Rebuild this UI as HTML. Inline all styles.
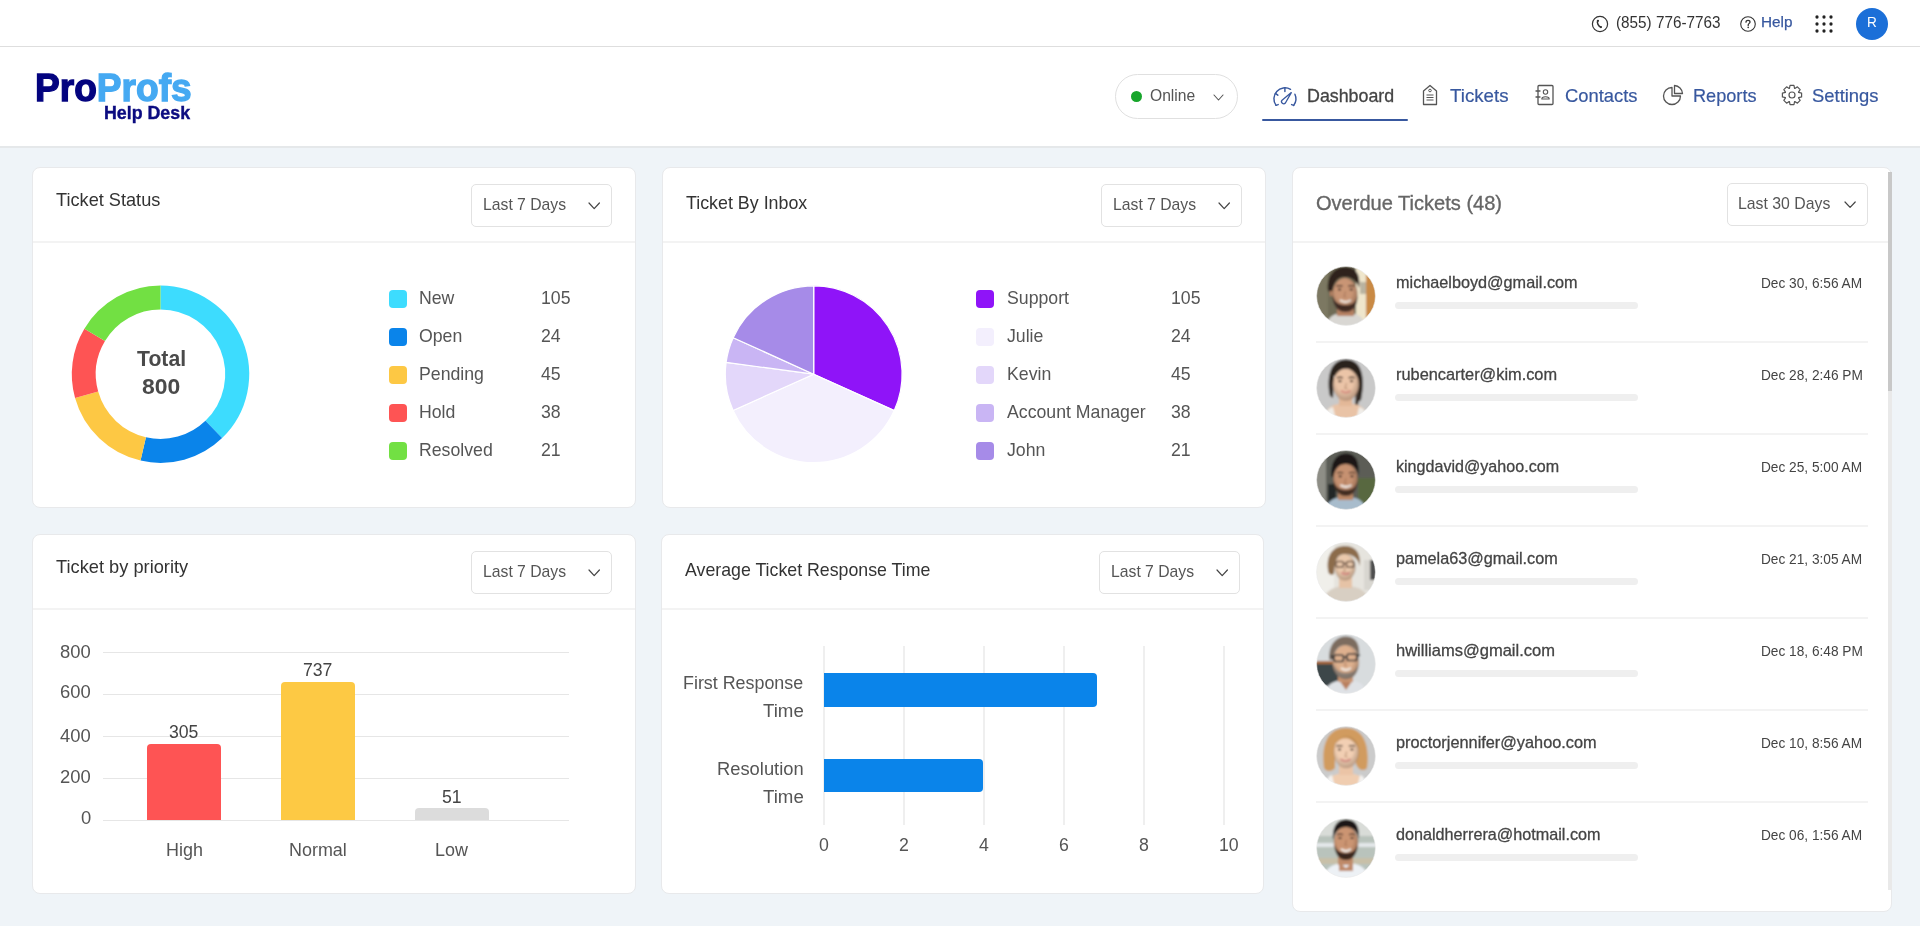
<!DOCTYPE html>
<html><head><meta charset="utf-8"><title>ProProfs Help Desk - Dashboard</title>
<style>
*{box-sizing:border-box;margin:0;padding:0}
html,body{width:1920px;height:928px;overflow:hidden;background:#fff;font-family:"Liberation Sans",sans-serif}
.t{position:absolute;line-height:1;white-space:nowrap;transform:scaleX(0.9999);transform-origin:0 0}
.abs{position:absolute;display:block}
.card{position:absolute;background:#fff;border:1px solid #e8e9eb;border-radius:8px}
.dd{position:absolute;border:1px solid #e2e2e2;border-radius:5px;background:#fff}
.sq{position:absolute;width:18px;height:18px;border-radius:4px}
</style></head><body>
<div class="abs" style="left:0px;top:46px;width:1920px;height:1px;background:#dedede;"></div>
<div class="abs" style="left:0px;top:146px;width:1920px;height:2px;background:#e5e8ea;"></div>
<div class="abs" style="left:0px;top:148px;width:1920px;height:778px;background:#eff4f8;"></div>
<svg class="abs" style="left:1590px;top:14px" width="20" height="20" viewBox="0 0 20 20">
<circle cx="10" cy="10" r="7.6" fill="none" stroke="#333" stroke-width="1.2"/>
<path d="M7.8,6.7 C6.6,8.6 8.4,12.4 10.9,13.1" fill="none" stroke="#333" stroke-width="1.5" stroke-linecap="round"/><circle cx="7.9" cy="6.8" r="1.15" fill="#333"/><circle cx="10.9" cy="13.1" r="1.15" fill="#333"/>
</svg>
<div class="t" style="left:1616.08px;top:15.39px;font-size:15.6px;color:#333;font-weight:400;transform:scaleX(0.9796);transform-origin:0 0;">(855) 776-7763</div>
<svg class="abs" style="left:1738px;top:14px" width="20" height="20" viewBox="0 0 20 20">
<circle cx="10" cy="10" r="7.3" fill="none" stroke="#333" stroke-width="1.1"/>
<path d="M8,8.2 C8,6.9 8.9,6.3 10,6.3 C11.1,6.3 12,7 12,8 C12,9.3 10.4,9.4 10.2,10.8 L10.2,11.4" fill="none" stroke="#333" stroke-width="1.3" stroke-linecap="round"/>
<circle cx="10.2" cy="13.4" r="0.8" fill="#333"/>
</svg>
<div class="t" style="left:1760.78px;top:14.18px;font-size:15.5px;color:#38589f;font-weight:400;transform:scaleX(0.9869);transform-origin:0 0;-webkit-text-stroke:0.25px #38589f;">Help</div>
<svg class="abs" style="left:1814px;top:14px" width="20" height="20"><circle cx="3" cy="3" r="1.65" fill="#222"/><circle cx="3" cy="10" r="1.65" fill="#222"/><circle cx="3" cy="17" r="1.65" fill="#222"/><circle cx="10" cy="3" r="1.65" fill="#222"/><circle cx="10" cy="10" r="1.65" fill="#222"/><circle cx="10" cy="17" r="1.65" fill="#222"/><circle cx="17" cy="3" r="1.65" fill="#222"/><circle cx="17" cy="10" r="1.65" fill="#222"/><circle cx="17" cy="17" r="1.65" fill="#222"/></svg>
<div class="abs" style="left:1856px;top:8px;width:32px;height:32px;border-radius:50%;background:#1b6fd8"></div>
<div class="t" style="left:1866.86px;top:15.47px;font-size:14.8px;color:#fff;font-weight:400;transform:scaleX(0.9200);transform-origin:0 0;">R</div>
<div class="t" style="left:35.19px;top:68.53px;font-size:38.6px;color:#0b0b80;font-weight:700;transform:scaleX(0.9620);transform-origin:0 0;"><span style="color:#03037f;-webkit-text-stroke:1.3px #03037f">Pro</span><span style="color:#45a9f2;-webkit-text-stroke:1.3px #45a9f2">Profs</span></div>
<div class="t" style="left:104.14px;top:102.92px;font-size:19px;color:#0b0b80;font-weight:700;transform:scaleX(0.9368);transform-origin:0 0;-webkit-text-stroke:0.4px #0b0b80;">Help Desk</div>
<div class="abs" style="left:1115px;top:74px;width:123px;height:45px;border:1px solid #e0e0e0;border-radius:23px;background:#fff"></div>
<div class="abs" style="left:1131px;top:91px;width:11px;height:11px;border-radius:50%;background:#17a52b"></div>
<div class="t" style="left:1150.10px;top:87.03px;font-size:16.5px;color:#555;font-weight:400;transform:scaleX(0.9481);transform-origin:0 0;">Online</div>
<svg class="abs" style="left:1212px;top:93.2px" width="13" height="9"><polyline points="2,2 6.5,7 11,2" fill="none" stroke="#555" stroke-width="1.1" stroke-linecap="round" stroke-linejoin="round"/></svg>
<svg class="abs" style="left:1268px;top:82px" width="34" height="28" viewBox="0 0 34 28">
<g fill="none" stroke="#38589f" stroke-width="1.45" stroke-linecap="round" stroke-linejoin="round">
<path d="M8.05,23.33 A11,11 0 0 1 22.53,7.35"/>
<path d="M26.92,12.27 A11,11 0 0 1 25.68,23.42"/>
<path d="M8.05,23.33 L10.2,22.6 M25.68,23.42 L23.6,22.6 M16.9,5.9 V9.5 M7.4,11.4 L9.8,13.2"/>
<path d="M14.02,18.18 L23.3,10.6 L17.38,21.02 A2.2,2.2 0 0 1 14.02,18.18 Z" stroke-width="1.3"/>
</g></svg>
<div class="t" style="left:1306.77px;top:85.72px;font-size:19px;color:#444;font-weight:400;transform:scaleX(0.9384);transform-origin:0 0;-webkit-text-stroke:0.3px #444;">Dashboard</div>
<div class="abs" style="left:1262px;top:119px;width:146px;height:2.2px;background:#38589f;border-radius:1.5px;"></div>
<svg class="abs" style="left:1421px;top:83px" width="18" height="24" viewBox="0 0 18 24">
<path d="M2.5,8 L9,2.5 L15.5,8 L15.5,21.5 L2.5,21.5 Z" fill="none" stroke="#555" stroke-width="1.3" stroke-linejoin="round"/>
<circle cx="9" cy="7.5" r="1.3" fill="none" stroke="#555" stroke-width="1"/>
<path d="M5.5,12 H12.5 M5.5,14.5 H12.5 M5.5,17 H12.5" stroke="#555" stroke-width="1"/>
</svg>
<div class="t" style="left:1450.43px;top:85.82px;font-size:19px;color:#38589f;font-weight:400;transform:scaleX(0.9842);transform-origin:0 0;-webkit-text-stroke:0.2px #38589f;">Tickets</div>
<svg class="abs" style="left:1533px;top:83px" width="24" height="24" viewBox="0 0 24 24">
<rect x="5" y="2.5" width="15" height="19" rx="1" fill="none" stroke="#555" stroke-width="1.3"/>
<path d="M3,8 H7 M3,14 H7" stroke="#555" stroke-width="1.3" stroke-linecap="round"/>
<circle cx="12.5" cy="9" r="2.2" fill="none" stroke="#555" stroke-width="1.1"/>
<path d="M8.8,16 C8.8,13 16.2,13 16.2,16 Z" fill="none" stroke="#555" stroke-width="1.1" stroke-linejoin="round"/>
</svg>
<div class="t" style="left:1564.88px;top:85.82px;font-size:19px;color:#38589f;font-weight:400;transform:scaleX(0.9667);transform-origin:0 0;-webkit-text-stroke:0.2px #38589f;">Contacts</div>
<svg class="abs" style="left:1661px;top:83px" width="24" height="24" viewBox="0 0 24 24">
<path d="M11,4.5 A8.5,8.5 0 1 0 19.5,13 L11,13 Z" fill="none" stroke="#555" stroke-width="1.3" stroke-linejoin="round"/>
<path d="M13.5,2.5 A8.5,8.5 0 0 1 21.5,10.5 L13.5,10.5 Z" fill="none" stroke="#555" stroke-width="1.3" stroke-linejoin="round"/>
</svg>
<div class="t" style="left:1692.55px;top:85.82px;font-size:19px;color:#38589f;font-weight:400;transform:scaleX(0.9547);transform-origin:0 0;-webkit-text-stroke:0.2px #38589f;">Reports</div>
<svg class="abs" style="left:1780px;top:83px" width="24" height="24" viewBox="0 0 24 24">
<path d="M10.05,2.40 L13.95,2.40 L14.57,5.38 L14.87,5.50 L17.41,3.83 L20.17,6.59 L18.50,9.13 L18.62,9.43 L21.60,10.05 L21.60,13.95 L18.62,14.57 L18.50,14.87 L20.17,17.41 L17.41,20.17 L14.87,18.50 L14.57,18.62 L13.95,21.60 L10.05,21.60 L9.43,18.62 L9.13,18.50 L6.59,20.17 L3.83,17.41 L5.50,14.87 L5.38,14.57 L2.40,13.95 L2.40,10.05 L5.38,9.43 L5.50,9.13 L3.83,6.59 L6.59,3.83 L9.13,5.50 L9.43,5.38 Z" fill="none" stroke="#555" stroke-width="1.2" stroke-linejoin="round"/>
<circle cx="12" cy="12" r="3" fill="none" stroke="#555" stroke-width="1.2"/>
</svg>
<div class="t" style="left:1811.87px;top:85.82px;font-size:19px;color:#38589f;font-weight:400;transform:scaleX(0.9693);transform-origin:0 0;-webkit-text-stroke:0.2px #38589f;">Settings</div>
<div class="card" style="left:32px;top:167px;width:604px;height:341px"></div>
<div class="card" style="left:662px;top:167px;width:604px;height:341px"></div>
<div class="card" style="left:32px;top:534px;width:604px;height:360px"></div>
<div class="card" style="left:661px;top:534px;width:603px;height:360px"></div>
<div class="card" style="left:1292px;top:167px;width:600px;height:745px"></div>
<div class="abs" style="left:33px;top:241px;width:602px;height:2px;background:#f3f3f3;"></div>
<div class="abs" style="left:663px;top:241px;width:602px;height:2px;background:#f3f3f3;"></div>
<div class="abs" style="left:33px;top:608px;width:602px;height:2px;background:#f3f3f3;"></div>
<div class="abs" style="left:662px;top:608px;width:601px;height:2px;background:#f3f3f3;"></div>
<div class="abs" style="left:1293px;top:241px;width:595px;height:2px;background:#f3f3f3;"></div>
<div class="t" style="left:56.24px;top:190.02px;font-size:19px;color:#333;font-weight:400;transform:scaleX(0.9564);transform-origin:0 0;">Ticket Status</div>
<div class="dd" style="left:471px;top:184px;width:141px;height:43px"></div>
<div class="t" style="left:482.74px;top:196.11px;font-size:17px;color:#555;font-weight:400;transform:scaleX(0.9259);transform-origin:0 0;">Last 7 Days</div>
<svg class="abs" style="left:586.8px;top:201.0px" width="14.4" height="9.6"><polyline points="2,2 7.2,7.6 12.4,2" fill="none" stroke="#444" stroke-width="1.2" stroke-linecap="round" stroke-linejoin="round"/></svg>
<svg class="abs" style="left:0;top:0" width="400" height="600"><path d="M160.50,297.50 A76.7,76.7 0 0 1 213.78,429.37" fill="none" stroke="#3ddcfe" stroke-width="24"/><path d="M213.78,429.37 A76.7,76.7 0 0 1 143.25,448.93" fill="none" stroke="#0a84ea" stroke-width="24"/><path d="M143.25,448.93 A76.7,76.7 0 0 1 86.63,394.83" fill="none" stroke="#fdc844" stroke-width="24"/><path d="M86.63,394.83 A76.7,76.7 0 0 1 94.69,334.81" fill="none" stroke="#fe5454" stroke-width="24"/><path d="M94.69,334.81 A76.7,76.7 0 0 1 160.50,297.50" fill="none" stroke="#72e043" stroke-width="24"/></svg>
<div class="t" style="left:137.39px;top:348.15px;font-size:21.8px;color:#4a4a4a;font-weight:700;transform:scaleX(0.9728);transform-origin:0 0;">Total</div>
<div class="t" style="left:142.31px;top:375.75px;font-size:21.8px;color:#4a4a4a;font-weight:700;transform:scaleX(1.0526);transform-origin:0 0;">800</div>
<div class="sq" style="left:389px;top:290.0px;background:#3ddcfe"></div>
<div class="t" style="left:419.20px;top:290.12px;font-size:17.7px;color:#555;font-weight:400;">New</div>
<div class="t" style="left:540.50px;top:290.12px;font-size:17.7px;color:#555;font-weight:400;">105</div>
<div class="sq" style="left:389px;top:328.0px;background:#0a84ea"></div>
<div class="t" style="left:419.20px;top:328.10px;font-size:17.7px;color:#555;font-weight:400;">Open</div>
<div class="t" style="left:540.50px;top:328.10px;font-size:17.7px;color:#555;font-weight:400;">24</div>
<div class="sq" style="left:389px;top:366.0px;background:#fdc844"></div>
<div class="t" style="left:419.20px;top:366.08px;font-size:17.7px;color:#555;font-weight:400;">Pending</div>
<div class="t" style="left:540.50px;top:366.08px;font-size:17.7px;color:#555;font-weight:400;">45</div>
<div class="sq" style="left:389px;top:403.9px;background:#fe5454"></div>
<div class="t" style="left:419.20px;top:404.06px;font-size:17.7px;color:#555;font-weight:400;">Hold</div>
<div class="t" style="left:540.50px;top:404.06px;font-size:17.7px;color:#555;font-weight:400;">38</div>
<div class="sq" style="left:389px;top:441.9px;background:#72e043"></div>
<div class="t" style="left:419.20px;top:442.04px;font-size:17.7px;color:#555;font-weight:400;">Resolved</div>
<div class="t" style="left:540.50px;top:442.04px;font-size:17.7px;color:#555;font-weight:400;">21</div>
<div class="t" style="left:685.89px;top:192.67px;font-size:19px;color:#333;font-weight:400;transform:scaleX(0.9387);transform-origin:0 0;">Ticket By Inbox</div>
<div class="dd" style="left:1101px;top:184px;width:141px;height:43px"></div>
<div class="t" style="left:1112.74px;top:196.11px;font-size:17px;color:#555;font-weight:400;transform:scaleX(0.9259);transform-origin:0 0;">Last 7 Days</div>
<svg class="abs" style="left:1216.8px;top:201.0px" width="14.4" height="9.6"><polyline points="2,2 7.2,7.6 12.4,2" fill="none" stroke="#444" stroke-width="1.2" stroke-linecap="round" stroke-linejoin="round"/></svg>
<svg class="abs" style="left:600px;top:200px" width="400" height="300"><g transform="translate(-600,-200)"><path d="M813.7,374.2 L813.70,285.80 A88.4,88.4 0 0 1 894.27,410.58 Z" fill="#8f14f8" stroke="#fff" stroke-width="1.2" stroke-linejoin="round"/><path d="M813.7,374.2 L894.27,410.58 A88.4,88.4 0 0 1 733.07,410.44 Z" fill="#f3effd" stroke="#fff" stroke-width="1.2" stroke-linejoin="round"/><path d="M813.7,374.2 L733.07,410.44 A88.4,88.4 0 0 1 726.10,362.36 Z" fill="#e3d7fa" stroke="#fff" stroke-width="1.2" stroke-linejoin="round"/><path d="M813.7,374.2 L726.10,362.36 A88.4,88.4 0 0 1 733.20,337.68 Z" fill="#c9b5f4" stroke="#fff" stroke-width="1.2" stroke-linejoin="round"/><path d="M813.7,374.2 L733.20,337.68 A88.4,88.4 0 0 1 813.70,285.80 Z" fill="#a68be8" stroke="#fff" stroke-width="1.2" stroke-linejoin="round"/></g></svg>
<div class="sq" style="left:976px;top:290.2px;background:#8f14f8"></div>
<div class="t" style="left:1007.00px;top:289.62px;font-size:17.7px;color:#555;font-weight:400;">Support</div>
<div class="t" style="left:1171.00px;top:289.62px;font-size:17.7px;color:#555;font-weight:400;">105</div>
<div class="sq" style="left:976px;top:328.2px;background:#f3effd"></div>
<div class="t" style="left:1007.00px;top:327.62px;font-size:17.7px;color:#555;font-weight:400;">Julie</div>
<div class="t" style="left:1171.00px;top:327.62px;font-size:17.7px;color:#555;font-weight:400;">24</div>
<div class="sq" style="left:976px;top:366.2px;background:#e3d7fa"></div>
<div class="t" style="left:1007.00px;top:365.62px;font-size:17.7px;color:#555;font-weight:400;">Kevin</div>
<div class="t" style="left:1171.00px;top:365.62px;font-size:17.7px;color:#555;font-weight:400;">45</div>
<div class="sq" style="left:976px;top:404.2px;background:#c9b5f4"></div>
<div class="t" style="left:1007.00px;top:403.62px;font-size:17.7px;color:#555;font-weight:400;">Account Manager</div>
<div class="t" style="left:1171.00px;top:403.62px;font-size:17.7px;color:#555;font-weight:400;">38</div>
<div class="sq" style="left:976px;top:442.2px;background:#a68be8"></div>
<div class="t" style="left:1007.00px;top:441.62px;font-size:17.7px;color:#555;font-weight:400;">John</div>
<div class="t" style="left:1171.00px;top:441.62px;font-size:17.7px;color:#555;font-weight:400;">21</div>
<div class="t" style="left:55.89px;top:557.02px;font-size:19px;color:#333;font-weight:400;transform:scaleX(0.9604);transform-origin:0 0;">Ticket by priority</div>
<div class="dd" style="left:471px;top:551px;width:141px;height:43px"></div>
<div class="t" style="left:482.74px;top:563.11px;font-size:17px;color:#555;font-weight:400;transform:scaleX(0.9259);transform-origin:0 0;">Last 7 Days</div>
<svg class="abs" style="left:586.8px;top:568.0px" width="14.4" height="9.6"><polyline points="2,2 7.2,7.6 12.4,2" fill="none" stroke="#444" stroke-width="1.2" stroke-linecap="round" stroke-linejoin="round"/></svg>
<div class="abs" style="left:103px;top:651.5px;width:466px;height:1.3px;background:#e6e6e6;"></div>
<div class="t" style="left:60.48px;top:642.87px;font-size:18.7px;color:#555;font-weight:400;transform:scaleX(0.9850);transform-origin:0 0;">800</div>
<div class="abs" style="left:103px;top:693.5px;width:466px;height:1.3px;background:#e6e6e6;"></div>
<div class="t" style="left:60.48px;top:683.07px;font-size:18.7px;color:#555;font-weight:400;transform:scaleX(0.9850);transform-origin:0 0;">600</div>
<div class="abs" style="left:103px;top:735.5px;width:466px;height:1.3px;background:#e6e6e6;"></div>
<div class="t" style="left:60.48px;top:727.07px;font-size:18.7px;color:#555;font-weight:400;transform:scaleX(0.9850);transform-origin:0 0;">400</div>
<div class="abs" style="left:103px;top:777.5px;width:466px;height:1.3px;background:#e6e6e6;"></div>
<div class="t" style="left:60.48px;top:767.97px;font-size:18.7px;color:#555;font-weight:400;transform:scaleX(0.9850);transform-origin:0 0;">200</div>
<div class="abs" style="left:103px;top:819.5px;width:466px;height:1.3px;background:#e6e6e6;"></div>
<div class="t" style="left:80.92px;top:808.87px;font-size:18.7px;color:#555;font-weight:400;transform:scaleX(0.9850);transform-origin:0 0;">0</div>
<div class="abs" style="left:147px;top:744px;width:74px;height:76.39999999999998px;background:#fe5454;border-radius:4px 4px 0 0;"></div>
<div class="t" style="left:169.41px;top:722.96px;font-size:18px;color:#444;font-weight:400;transform:scaleX(0.9800);transform-origin:0 0;">305</div>
<div class="abs" style="left:281px;top:682px;width:74px;height:138.39999999999998px;background:#fdc944;border-radius:4px 4px 0 0;"></div>
<div class="t" style="left:303.31px;top:661.36px;font-size:18px;color:#444;font-weight:400;transform:scaleX(0.9800);transform-origin:0 0;">737</div>
<div class="abs" style="left:415px;top:808px;width:74px;height:12.399999999999977px;background:#dcdcdc;border-radius:4px 4px 0 0;"></div>
<div class="t" style="left:442.25px;top:787.96px;font-size:18px;color:#444;font-weight:400;transform:scaleX(0.9800);transform-origin:0 0;">51</div>
<div class="t" style="left:166.17px;top:841.37px;font-size:18.7px;color:#555;font-weight:400;transform:scaleX(0.9600);transform-origin:0 0;">High</div>
<div class="t" style="left:288.96px;top:841.37px;font-size:18.7px;color:#555;font-weight:400;transform:scaleX(0.9600);transform-origin:0 0;">Normal</div>
<div class="t" style="left:434.81px;top:841.37px;font-size:18.7px;color:#555;font-weight:400;transform:scaleX(0.9600);transform-origin:0 0;">Low</div>
<div class="t" style="left:684.70px;top:560.17px;font-size:19px;color:#333;font-weight:400;transform:scaleX(0.9342);transform-origin:0 0;">Average Ticket Response Time</div>
<div class="dd" style="left:1099px;top:551px;width:141px;height:43px"></div>
<div class="t" style="left:1110.74px;top:563.11px;font-size:17px;color:#555;font-weight:400;transform:scaleX(0.9259);transform-origin:0 0;">Last 7 Days</div>
<svg class="abs" style="left:1214.8px;top:568.0px" width="14.4" height="9.6"><polyline points="2,2 7.2,7.6 12.4,2" fill="none" stroke="#444" stroke-width="1.2" stroke-linecap="round" stroke-linejoin="round"/></svg>
<div class="abs" style="left:823px;top:646px;width:1.6px;height:179.3px;background:#efefef;"></div>
<div class="t" style="left:819.03px;top:835.71px;font-size:18.3px;color:#555;font-weight:400;transform:scaleX(0.9700);transform-origin:0 0;">0</div>
<div class="abs" style="left:903px;top:646px;width:1.6px;height:179.3px;background:#efefef;"></div>
<div class="t" style="left:899.07px;top:835.71px;font-size:18.3px;color:#555;font-weight:400;transform:scaleX(0.9700);transform-origin:0 0;">2</div>
<div class="abs" style="left:983px;top:646px;width:1.6px;height:179.3px;background:#efefef;"></div>
<div class="t" style="left:979.16px;top:835.71px;font-size:18.3px;color:#555;font-weight:400;transform:scaleX(0.9700);transform-origin:0 0;">4</div>
<div class="abs" style="left:1063px;top:646px;width:1.6px;height:179.3px;background:#efefef;"></div>
<div class="t" style="left:1058.99px;top:835.71px;font-size:18.3px;color:#555;font-weight:400;transform:scaleX(0.9700);transform-origin:0 0;">6</div>
<div class="abs" style="left:1143px;top:646px;width:1.6px;height:179.3px;background:#efefef;"></div>
<div class="t" style="left:1139.03px;top:835.71px;font-size:18.3px;color:#555;font-weight:400;transform:scaleX(0.9700);transform-origin:0 0;">8</div>
<div class="abs" style="left:1223px;top:646px;width:1.6px;height:179.3px;background:#efefef;"></div>
<div class="t" style="left:1218.79px;top:835.71px;font-size:18.3px;color:#555;font-weight:400;transform:scaleX(0.9700);transform-origin:0 0;">10</div>
<div class="abs" style="left:823.8px;top:672.9px;width:273.4px;height:34px;background:#0a84ea;border-radius:0 4px 4px 0;"></div>
<div class="abs" style="left:823.8px;top:759.2px;width:159px;height:33.3px;background:#0a84ea;border-radius:0 4px 4px 0;"></div>
<div class="t" style="left:683.42px;top:674.13px;font-size:18.75px;color:#555;font-weight:400;transform:scaleX(0.9531);transform-origin:0 0;">First Response</div>
<div class="t" style="left:762.83px;top:701.93px;font-size:18.75px;color:#555;font-weight:400;transform:scaleX(0.9962);transform-origin:0 0;">Time</div>
<div class="t" style="left:717.33px;top:759.73px;font-size:18.75px;color:#555;font-weight:400;transform:scaleX(0.9782);transform-origin:0 0;">Resolution</div>
<div class="t" style="left:762.83px;top:787.53px;font-size:18.75px;color:#555;font-weight:400;transform:scaleX(0.9962);transform-origin:0 0;">Time</div>
<div class="t" style="left:1316.10px;top:193.11px;font-size:20.9px;color:#666;font-weight:400;transform:scaleX(0.9595);transform-origin:0 0;-webkit-text-stroke:0.35px #666;">Overdue Tickets (48)</div>
<div class="dd" style="left:1727px;top:183px;width:141px;height:43px"></div>
<div class="t" style="left:1738.48px;top:195.42px;font-size:16.4px;color:#555;font-weight:400;transform:scaleX(0.9653);transform-origin:0 0;">Last 30 Days</div>
<svg class="abs" style="left:1843px;top:200.3px" width="14.2" height="9.4"><polyline points="2,2 7.1,7.4 12.2,2" fill="none" stroke="#444" stroke-width="1.2" stroke-linecap="round" stroke-linejoin="round"/></svg>
<div class="abs" style="left:1888px;top:391px;width:4px;height:499px;background:#e9e9e9;"></div>
<div class="abs" style="left:1888px;top:172px;width:4px;height:219px;background:#c8c8c8;"></div>
<svg class="abs" style="left:1314px;top:264px" width="64" height="64" viewBox="0 0 64 64"><defs><clipPath id="ac0"><circle cx="32" cy="32" r="29.4"/></clipPath><filter id="af0" x="-10%" y="-10%" width="120%" height="120%"><feGaussianBlur stdDeviation="0.9"/></filter><radialGradient id="sh0" cx="0.45" cy="0.4" r="0.6"><stop offset="0.55" stop-color="#000" stop-opacity="0"/><stop offset="1" stop-color="#3a2010" stop-opacity="0.28"/></radialGradient></defs><g clip-path="url(#ac0)"><g filter="url(#af0)"><rect width="64" height="64" fill="#6f6c56"/><rect x="0" y="0" width="14" height="64" fill="#7c7862"/>
<rect x="42" y="0" width="22" height="64" fill="#efe6cc"/><rect x="52" y="10" width="12" height="54" fill="#c98a45"/><rect x="46" y="18" width="6" height="12" fill="#b9b3a0"/>
<path d="M12,64 C13,52 20,49 32,49 C44,49 50,52 51,64 Z" fill="#d9d7d3"/>
<rect x="23" y="40" width="17" height="12" fill="#b58062"/>
<ellipse cx="31" cy="30" rx="12.3" ry="16" fill="#c99575"/>
<path d="M18.5,31 C19,44 25,48 31.5,48 C38,48 43.5,44 43.6,31 C42,39 38,41 31.5,41 C25,41 21,39 18.5,31 Z" fill="#44302a"/>
<path d="M26,36 C29,38.5 34,38.5 37,36" fill="none" stroke="#f2ece6" stroke-width="2"/>
<path d="M14,27 C12,10 22,3 31,3 C41,3 47,9 45,24 C43,17 38,13 31,13 C24,13 20,17 18,28 Z" fill="#2f231a"/>
<rect x="16" y="27" width="2.5" height="5" fill="#b88060"/><ellipse cx="31" cy="30" rx="12.8" ry="16.5" fill="url(#sh0)"/><path d="M31.5,27.5 L30,32.5 L32.5,33.0" fill="none" stroke="#8a5a40" stroke-opacity="0.45" stroke-width="1.2"/><g fill="#3a2a22"><ellipse cx="25.5" cy="25.5" rx="1.7" ry="1.1"/><ellipse cx="37.2" cy="25.5" rx="1.7" ry="1.1"/></g><path d="M22.5,22.2 Q25.5,20.9 28.5,22.2 M34.2,22.2 Q37.2,20.9 40.2,22.2" fill="none" stroke="#3a2a22" stroke-width="1.3"/></g></g><circle cx="32" cy="32" r="29.4" fill="none" stroke="#e9e9e9" stroke-width="0.6"/></svg>
<div class="t" style="left:1395.95px;top:274.01px;font-size:17px;color:#444;font-weight:400;transform:scaleX(0.9547);transform-origin:0 0;-webkit-text-stroke:0.3px #444;">michaelboyd@gmail.com</div>
<div class="abs" style="left:1395px;top:302px;width:243px;height:7px;background:#efefef;border-radius:4px;"></div>
<div class="t" style="left:1761.30px;top:275.81px;font-size:14.4px;color:#444;font-weight:400;transform:scaleX(0.9500);transform-origin:0 0;">Dec 30, 6:56 AM</div>
<div class="abs" style="left:1316px;top:341px;width:552px;height:2px;background:#f3f3f3;"></div>
<svg class="abs" style="left:1314px;top:356px" width="64" height="64" viewBox="0 0 64 64"><defs><clipPath id="ac1"><circle cx="32" cy="32" r="29.4"/></clipPath><filter id="af1" x="-10%" y="-10%" width="120%" height="120%"><feGaussianBlur stdDeviation="0.9"/></filter><radialGradient id="sh1" cx="0.45" cy="0.4" r="0.6"><stop offset="0.55" stop-color="#000" stop-opacity="0"/><stop offset="1" stop-color="#3a2010" stop-opacity="0.28"/></radialGradient></defs><g clip-path="url(#ac1)"><g filter="url(#af1)"><rect width="64" height="64" fill="#c9c9c9"/>
<path d="M16,40 C13,26 14,3.5 32,3.5 C50,3.5 51,26 47,44 L44,46 L43,20 L20,20 L19,42 Z" fill="#2b221c"/><path d="M42,30 L46,30 L44,50 L41,50 Z" fill="#3a302a"/>
<path d="M10,64 C12,52 16,48 32,47 C48,48 52,52 54,64 Z" fill="#e9c3a6"/>
<path d="M10,64 C11,56 14,52 19,51 L22,64 Z M54,64 C53,56 50,52 45,51 L42,64 Z" fill="#f0ede8"/>
<rect x="25" y="38" width="13" height="12" fill="#e3b898"/>
<ellipse cx="32" cy="28.3" rx="12.8" ry="16" fill="#ebc4a7"/>
<path d="M19,22 C20,11 27,8.5 32,8.5 C38,8.5 44,12 44.8,23 C41,15 36,12.5 32,12.5 C26,12.5 22,16 19,22 Z" fill="#2b221c"/>
<path d="M27,34.5 C30,37 33.5,37 36.5,34.5" fill="none" stroke="#d98f82" stroke-width="2"/><ellipse cx="32" cy="28.3" rx="13.3" ry="16.5" fill="url(#sh1)"/><path d="M32.5,27.2 L31,32.2 L33.5,32.7" fill="none" stroke="#8a5a40" stroke-opacity="0.45" stroke-width="1.2"/><g fill="#3a2a22"><ellipse cx="25.9" cy="25.2" rx="1.7" ry="1.1"/><ellipse cx="37.6" cy="25.2" rx="1.7" ry="1.1"/></g><path d="M22.9,21.9 Q25.9,20.6 28.9,21.9 M34.6,21.9 Q37.6,20.6 40.6,21.9" fill="none" stroke="#3a2a22" stroke-width="1.3"/></g></g><circle cx="32" cy="32" r="29.4" fill="none" stroke="#e9e9e9" stroke-width="0.6"/></svg>
<div class="t" style="left:1395.94px;top:366.08px;font-size:17px;color:#444;font-weight:400;transform:scaleX(0.9617);transform-origin:0 0;-webkit-text-stroke:0.3px #444;">rubencarter@kim.com</div>
<div class="abs" style="left:1395px;top:394px;width:243px;height:7px;background:#efefef;border-radius:4px;"></div>
<div class="t" style="left:1760.55px;top:367.88px;font-size:14.4px;color:#444;font-weight:400;transform:scaleX(0.9500);transform-origin:0 0;">Dec 28, 2:46 PM</div>
<div class="abs" style="left:1316px;top:433px;width:552px;height:2px;background:#f3f3f3;"></div>
<svg class="abs" style="left:1314px;top:448px" width="64" height="64" viewBox="0 0 64 64"><defs><clipPath id="ac2"><circle cx="32" cy="32" r="29.4"/></clipPath><filter id="af2" x="-10%" y="-10%" width="120%" height="120%"><feGaussianBlur stdDeviation="0.9"/></filter><radialGradient id="sh2" cx="0.45" cy="0.4" r="0.6"><stop offset="0.55" stop-color="#000" stop-opacity="0"/><stop offset="1" stop-color="#3a2010" stop-opacity="0.28"/></radialGradient></defs><g clip-path="url(#ac2)"><g filter="url(#af2)"><rect width="64" height="64" fill="#5c5d57"/><rect x="0" y="0" width="12" height="64" fill="#8e8e86"/>
<rect x="44" y="30" width="20" height="30" fill="#58683f"/><rect x="14" y="36" width="8" height="20" fill="#222826"/>
<path d="M11,64 C12,53 19,49 32,49 C45,49 51,53 52,64 Z" fill="#a8bccc"/>
<rect x="24" y="40" width="15" height="12" fill="#b98665"/>
<ellipse cx="31.5" cy="31" rx="12" ry="16" fill="#c69171"/>
<path d="M19.5,32 C20,44 26,48 32,48 C38,48 43,44 43.5,32 C42,40 38,42 32,42 C26,42 21.5,40 19.5,32 Z" fill="#4a342a"/>
<path d="M26.5,37 C29.5,39.5 34.5,39.5 37.5,37" fill="none" stroke="#f4f0ec" stroke-width="2.2"/>
<path d="M17.5,29 C16,12 24,5.5 32,5.5 C40,5.5 46,11 44.5,27 C43,20 38,16 32,16 C25,16 21,20 19,29 Z" fill="#1b1714"/><ellipse cx="31.5" cy="31" rx="12.5" ry="16.5" fill="url(#sh2)"/><path d="M32.0,30.3 L30.5,35.3 L33.0,35.8" fill="none" stroke="#8a5a40" stroke-opacity="0.45" stroke-width="1.2"/><g fill="#3a2a22"><ellipse cx="26.2" cy="28.3" rx="1.7" ry="1.1"/><ellipse cx="37.9" cy="28.3" rx="1.7" ry="1.1"/></g><path d="M23.2,25.0 Q26.2,23.700000000000003 29.2,25.0 M34.9,25.0 Q37.9,23.700000000000003 40.9,25.0" fill="none" stroke="#3a2a22" stroke-width="1.3"/></g></g><circle cx="32" cy="32" r="29.4" fill="none" stroke="#e9e9e9" stroke-width="0.6"/></svg>
<div class="t" style="left:1395.95px;top:458.15px;font-size:17px;color:#444;font-weight:400;transform:scaleX(0.9466);transform-origin:0 0;-webkit-text-stroke:0.3px #444;">kingdavid@yahoo.com</div>
<div class="abs" style="left:1395px;top:486px;width:243px;height:7px;background:#efefef;border-radius:4px;"></div>
<div class="t" style="left:1761.30px;top:459.95px;font-size:14.4px;color:#444;font-weight:400;transform:scaleX(0.9500);transform-origin:0 0;">Dec 25, 5:00 AM</div>
<div class="abs" style="left:1316px;top:525px;width:552px;height:2px;background:#f3f3f3;"></div>
<svg class="abs" style="left:1314px;top:540px" width="64" height="64" viewBox="0 0 64 64"><defs><clipPath id="ac3"><circle cx="32" cy="32" r="29.4"/></clipPath><filter id="af3" x="-10%" y="-10%" width="120%" height="120%"><feGaussianBlur stdDeviation="0.9"/></filter><radialGradient id="sh3" cx="0.45" cy="0.4" r="0.6"><stop offset="0.55" stop-color="#000" stop-opacity="0"/><stop offset="1" stop-color="#3a2010" stop-opacity="0.28"/></radialGradient></defs><g clip-path="url(#ac3)"><g filter="url(#af3)"><rect width="64" height="64" fill="#e6e4de"/><rect x="0" y="0" width="20" height="64" fill="#f0efea"/><rect x="50" y="20" width="14" height="30" fill="#d8d6d0"/><rect x="56" y="20" width="8" height="20" fill="#505050"/>
<path d="M8,64 C10,52 18,46 32,46 C46,46 54,52 56,64 Z" fill="#d8cfc3"/>
<rect x="25" y="34" width="13" height="14" fill="#e6c3a6"/>
<ellipse cx="31" cy="27" rx="10.2" ry="13" fill="#eac9ac"/>
<path d="M14,30 C12,14 20,6 31,6 C41,6 47,12 46,26 C44,18 38,14 31,14 C24,14 21,18 20,34 C17,36 14,34 14,30 Z" fill="#8c6c4c"/>
<g fill="none" stroke="#6e5646" stroke-width="1.5"><rect x="22" y="21.5" width="7.5" height="5.5" rx="1.8"/><rect x="32.5" y="21.5" width="7.5" height="5.5" rx="1.8"/><path d="M29.5,23.5 H32.5"/></g>
<path d="M27.5,32.5 C30,34.5 33,34.5 35.5,32.5" fill="none" stroke="#d67f7c" stroke-width="1.8"/><ellipse cx="31" cy="27" rx="10.7" ry="13.5" fill="url(#sh3)"/><path d="M31.5,26.5 L30,31.5 L32.5,32.0" fill="none" stroke="#8a5a40" stroke-opacity="0.45" stroke-width="1.2"/></g></g><circle cx="32" cy="32" r="29.4" fill="none" stroke="#e9e9e9" stroke-width="0.6"/></svg>
<div class="t" style="left:1395.94px;top:550.22px;font-size:17px;color:#444;font-weight:400;transform:scaleX(0.9552);transform-origin:0 0;-webkit-text-stroke:0.3px #444;">pamela63@gmail.com</div>
<div class="abs" style="left:1395px;top:578px;width:243px;height:7px;background:#efefef;border-radius:4px;"></div>
<div class="t" style="left:1761.30px;top:552.02px;font-size:14.4px;color:#444;font-weight:400;transform:scaleX(0.9500);transform-origin:0 0;">Dec 21, 3:05 AM</div>
<div class="abs" style="left:1316px;top:617px;width:552px;height:2px;background:#f3f3f3;"></div>
<svg class="abs" style="left:1314px;top:632px" width="64" height="64" viewBox="0 0 64 64"><defs><clipPath id="ac4"><circle cx="32" cy="32" r="29.4"/></clipPath><filter id="af4" x="-10%" y="-10%" width="120%" height="120%"><feGaussianBlur stdDeviation="0.9"/></filter><radialGradient id="sh4" cx="0.45" cy="0.4" r="0.6"><stop offset="0.55" stop-color="#000" stop-opacity="0"/><stop offset="1" stop-color="#3a2010" stop-opacity="0.28"/></radialGradient></defs><g clip-path="url(#ac4)"><g filter="url(#af4)"><rect width="64" height="64" fill="#d8dcde"/><rect x="0" y="30" width="24" height="24" fill="#3e4648"/><rect x="0" y="29" width="22" height="3" fill="#a8693a"/>
<path d="M10,64 C12,52 19,48 32,48 C45,48 52,52 54,64 Z" fill="#dfe2e6"/>
<path d="M25,48 L32,58 L39,48 Z" fill="#b9805e"/>
<rect x="24" y="38" width="15" height="12" fill="#c89370"/>
<ellipse cx="31.7" cy="30" rx="13" ry="17" fill="#deb08e"/>
<path d="M19.5,32 C20.5,44 26,47 32,47 C38,47 43.5,44 44.5,32 C42,39 38,41 32,41 C26,41 22,39 19.5,32 Z" fill="#9a8e84"/>
<path d="M15.5,28 C14,12 23,4.5 31.5,4.5 C40,4.5 47,10 45,26 C43,18 38,13 31.5,13 C25,13 20,18 19,28 Z" fill="#7b6c5e"/>
<g fill="none" stroke="#2e3034" stroke-width="1.7"><rect x="20" y="23" width="9.5" height="6.5" rx="2"/><rect x="33" y="22" width="10" height="6.5" rx="2"/><path d="M29.5,25 H33 M20,25 L16,24 M43,24 L46,23"/></g>
<path d="M27,36 C30,38.5 34,38.5 37,36" fill="none" stroke="#f3ede6" stroke-width="2"/><ellipse cx="31.7" cy="30" rx="13.5" ry="17.5" fill="url(#sh4)"/><path d="M32.2,28.5 L30.7,33.5 L33.2,34.0" fill="none" stroke="#8a5a40" stroke-opacity="0.45" stroke-width="1.2"/></g></g><circle cx="32" cy="32" r="29.4" fill="none" stroke="#e9e9e9" stroke-width="0.6"/></svg>
<div class="t" style="left:1395.84px;top:642.29px;font-size:17px;color:#444;font-weight:400;transform:scaleX(0.9714);transform-origin:0 0;-webkit-text-stroke:0.3px #444;">hwilliams@gmail.com</div>
<div class="abs" style="left:1395px;top:670px;width:243px;height:7px;background:#efefef;border-radius:4px;"></div>
<div class="t" style="left:1760.55px;top:644.09px;font-size:14.4px;color:#444;font-weight:400;transform:scaleX(0.9500);transform-origin:0 0;">Dec 18, 6:48 PM</div>
<div class="abs" style="left:1316px;top:709px;width:552px;height:2px;background:#f3f3f3;"></div>
<svg class="abs" style="left:1314px;top:724px" width="64" height="64" viewBox="0 0 64 64"><defs><clipPath id="ac5"><circle cx="32" cy="32" r="29.4"/></clipPath><filter id="af5" x="-10%" y="-10%" width="120%" height="120%"><feGaussianBlur stdDeviation="0.9"/></filter><radialGradient id="sh5" cx="0.45" cy="0.4" r="0.6"><stop offset="0.55" stop-color="#000" stop-opacity="0"/><stop offset="1" stop-color="#3a2010" stop-opacity="0.28"/></radialGradient></defs><g clip-path="url(#ac5)"><g filter="url(#af5)"><rect width="64" height="64" fill="#cbcbcb"/>
<path d="M10,44 C7,20 14,4 32,4 C50,4 56,22 53,44 C50,48 44,46 42,40 L42,18 L21,18 L21,44 C18,48 12,48 10,44 Z" fill="#d19b5e"/>
<path d="M12,64 C13,54 17,50 32,49 C47,50 51,54 52,64 Z" fill="#f0cdb0"/>
<path d="M12,64 C12,56 14,52 18,51 L21,64 Z M52,64 C52,56 50,52 46,51 L43,64 Z" fill="#f4f3f1"/>
<rect x="25" y="38" width="14" height="13" fill="#ebc4a6"/>
<ellipse cx="32.2" cy="28" rx="12.2" ry="15.8" fill="#f2cfb3"/>
<path d="M19.5,24 C19,12 26,9 32,9 C39,9 44,13 44,24 C41,17 36,14.5 31.5,14.5 C26,14.5 22,17 19.5,24 Z" fill="#d19b5e"/>
<path d="M26.5,35 C29.5,37.5 33.5,37.5 36.5,35" fill="none" stroke="#d98d84" stroke-width="2"/><ellipse cx="32.2" cy="28" rx="12.7" ry="16.3" fill="url(#sh5)"/><path d="M32.7,27.5 L31.200000000000003,32.5 L33.7,33.0" fill="none" stroke="#8a5a40" stroke-opacity="0.45" stroke-width="1.2"/><g fill="#3a2a22"><ellipse cx="25.5" cy="25.5" rx="1.7" ry="1.1"/><ellipse cx="37.9" cy="25.5" rx="1.7" ry="1.1"/></g><path d="M22.5,22.2 Q25.5,20.9 28.5,22.2 M34.9,22.2 Q37.9,20.9 40.9,22.2" fill="none" stroke="#3a2a22" stroke-width="1.3"/></g></g><circle cx="32" cy="32" r="29.4" fill="none" stroke="#e9e9e9" stroke-width="0.6"/></svg>
<div class="t" style="left:1395.94px;top:734.36px;font-size:17px;color:#444;font-weight:400;transform:scaleX(0.9599);transform-origin:0 0;-webkit-text-stroke:0.3px #444;">proctorjennifer@yahoo.com</div>
<div class="abs" style="left:1395px;top:762px;width:243px;height:7px;background:#efefef;border-radius:4px;"></div>
<div class="t" style="left:1761.30px;top:736.16px;font-size:14.4px;color:#444;font-weight:400;transform:scaleX(0.9500);transform-origin:0 0;">Dec 10, 8:56 AM</div>
<div class="abs" style="left:1316px;top:801px;width:552px;height:2px;background:#f3f3f3;"></div>
<svg class="abs" style="left:1314px;top:816px" width="64" height="64" viewBox="0 0 64 64"><defs><clipPath id="ac6"><circle cx="32" cy="32" r="29.4"/></clipPath><filter id="af6" x="-10%" y="-10%" width="120%" height="120%"><feGaussianBlur stdDeviation="0.9"/></filter><radialGradient id="sh6" cx="0.45" cy="0.4" r="0.6"><stop offset="0.55" stop-color="#000" stop-opacity="0"/><stop offset="1" stop-color="#3a2010" stop-opacity="0.28"/></radialGradient></defs><g clip-path="url(#ac6)"><g filter="url(#af6)"><rect width="64" height="64" fill="#b9c3bc"/><rect x="0" y="0" width="64" height="20" fill="#d9dcd8"/><rect x="0" y="27" width="64" height="4" fill="#e4e8ea"/><rect x="0" y="42" width="64" height="6" fill="#c8c0a8"/>
<path d="M9,64 C11,52 18,47 32,47 C46,47 53,52 55,64 Z" fill="#edf1f5"/>
<path d="M25,46 L32,52 L39,46 L39,55 L25,55 Z" fill="#c08a6a"/>
<rect x="24" y="38" width="15" height="11" fill="#bf8a69"/>
<ellipse cx="32" cy="26.8" rx="12" ry="16.3" fill="#cb9472"/>
<path d="M20.5,28 C21,40 26,44 32,44 C38,44 43,40 43.5,28 C42,35 38,37 32,37 C26,37 22,35 20.5,28 Z" fill="#3e2c24"/>
<path d="M27,33 C30,35.5 34,35.5 37,33" fill="none" stroke="#f5f2ee" stroke-width="2.2"/>
<path d="M19,24 C18,8 25,3.5 32,3.5 C40,3.5 46,8 45,23 C43,15 38,11 32,11 C26,11 21,15 19,24 Z" fill="#1d1713"/><ellipse cx="32" cy="26.8" rx="12.5" ry="16.8" fill="url(#sh6)"/><path d="M32.5,24 L31,29 L33.5,29.5" fill="none" stroke="#8a5a40" stroke-opacity="0.45" stroke-width="1.2"/><g fill="#3a2a22"><ellipse cx="26" cy="22" rx="1.7" ry="1.1"/><ellipse cx="38" cy="22" rx="1.7" ry="1.1"/></g><path d="M23,18.7 Q26,17.4 29,18.7 M35,18.7 Q38,17.4 41,18.7" fill="none" stroke="#3a2a22" stroke-width="1.3"/></g></g><circle cx="32" cy="32" r="29.4" fill="none" stroke="#e9e9e9" stroke-width="0.6"/></svg>
<div class="t" style="left:1396.35px;top:826.43px;font-size:17px;color:#444;font-weight:400;transform:scaleX(0.9521);transform-origin:0 0;-webkit-text-stroke:0.3px #444;">donaldherrera@hotmail.com</div>
<div class="abs" style="left:1395px;top:854px;width:243px;height:7px;background:#efefef;border-radius:4px;"></div>
<div class="t" style="left:1761.30px;top:828.23px;font-size:14.4px;color:#444;font-weight:400;transform:scaleX(0.9500);transform-origin:0 0;">Dec 06, 1:56 AM</div>
</body></html>
